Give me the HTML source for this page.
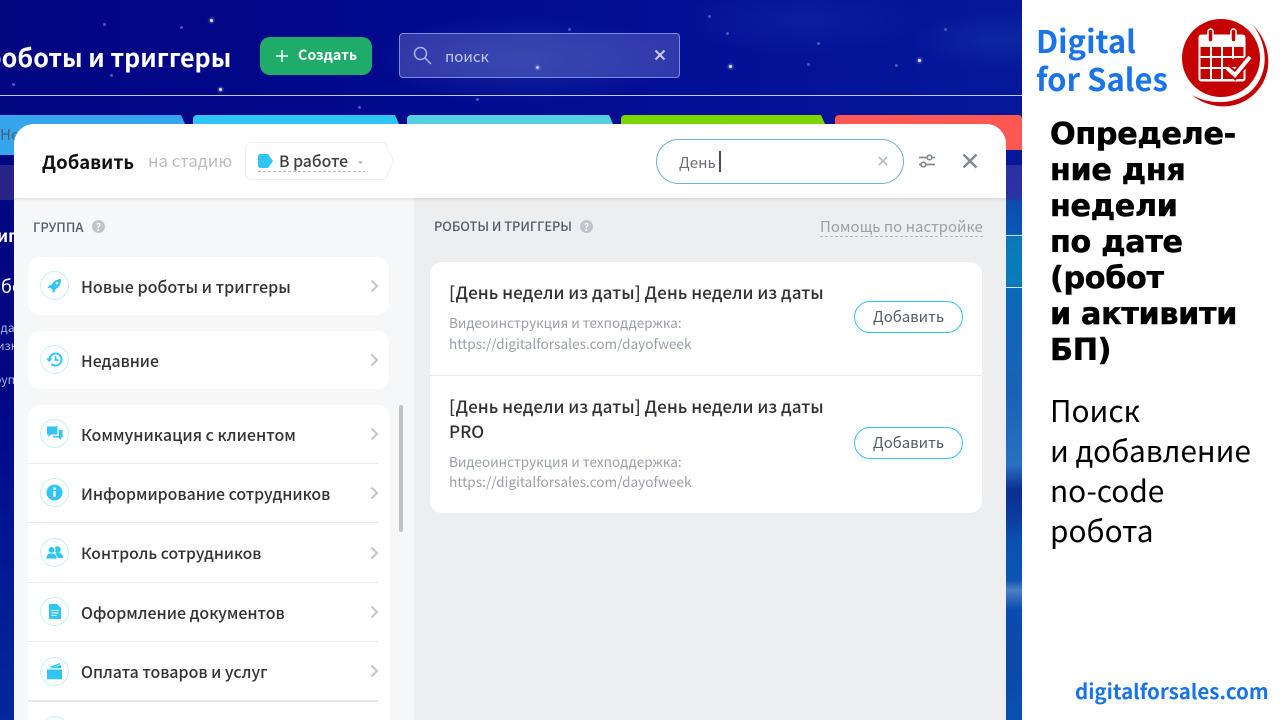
<!DOCTYPE html>
<html lang="ru"><head><meta charset="utf-8"><title>Роботы и триггеры</title>
<style>
*{box-sizing:border-box}
html,body{margin:0;padding:0;width:1280px;height:720px;overflow:hidden;background:#fff}
body{font-family:"Noto Sans CJK SC","Liberation Sans",sans-serif;color:#333}
#root{position:absolute;left:0;top:0;width:1280px;height:720px;overflow:hidden}
.a{position:absolute}
.t{position:absolute;white-space:nowrap;line-height:1}
#bg{left:0;top:0;width:1022px;height:720px;background:radial-gradient(ellipse 150px 45px at 520px 60px,rgba(50,90,190,.3),rgba(50,90,190,0)),radial-gradient(ellipse 120px 35px at 800px 20px,rgba(40,80,190,.2),rgba(40,80,190,0)),radial-gradient(ellipse 90px 30px at 1000px 40px,rgba(40,90,190,.25),rgba(40,90,190,0)),linear-gradient(90deg,#010681 0,#01088a 30%,#030f96 65%,#05189a 100%)}
#bg2{left:1006px;top:165px;width:16px;height:555px;background:linear-gradient(180deg,#2a2f9f 0,#2a35a0 33px,#0c4cb0 36px,#0a58b2 68px,#0a78b8 72px,#0a7cba 118px,#0d68b8 125px,#1a62b8 230px,#2a70c0 300px,#0a2f90 325px,#0a3a9c 350px,#0a50b0 375px,#0c55b2 415px,#4a80c4 425px,#0a4cae 445px,#0a4aa8 500px,#0a4fb0 555px)}
#bgl{left:0;top:400px;width:14px;height:320px;background:linear-gradient(180deg,#010788,#021f96 70%,#04279c)}
.star{position:absolute;border-radius:50%;background:#dfe3fa;box-shadow:0 0 2px 1px rgba(170,180,240,.6)}
.dim{position:absolute;width:3px;height:3px;border-radius:50%;background:#4a58bc}
.tab{position:absolute;top:115px;height:40px;border-radius:4px 4px 0 0;clip-path:polygon(0 0,calc(100% - 4px) 0,100% 9px,100% 100%,0 100%)}
.row{position:absolute;left:28px;width:362px;background:#fff}
.ic{position:absolute;left:40px;width:29px;height:29px;border-radius:50%;background:#fff;border:1px solid #c9eefb}
.ic svg{position:absolute;left:5px;top:5px;width:17px;height:17px}
.lbl{position:absolute;left:81px;font-size:15.9px;line-height:1;white-space:nowrap;color:#333;font-weight:500}
.chev{position:absolute;left:370px;width:9px;height:14px}
.sep{position:absolute;left:28px;width:350px;height:1px;background:#e9ebed}
.btn{position:absolute;left:854px;width:109px;height:32px;border:1px solid #2fc6f6;border-radius:16px;background:#fff;font-size:15px;line-height:29px;text-align:center;color:#535c69}
.ttl{position:absolute;left:449px;font-size:17.1px;line-height:1;white-space:nowrap;color:#333;font-weight:500}
.sub{position:absolute;left:449px;line-height:1;white-space:nowrap;color:#999fa6}
.h{position:absolute;left:1050px;font-family:"DejaVu Sans",sans-serif;font-weight:700;font-size:30.2px;letter-spacing:-.3px;-webkit-text-stroke:.5px #000;line-height:1;white-space:nowrap;color:#000}
.r{position:absolute;left:1050px;font-size:29.8px;line-height:1;white-space:nowrap;color:#000}
</style></head><body><div id="root">
<div id="bg" class="a"></div>
<div id="bg2" class="a"></div>
<div id="bgl" class="a"></div>
<div class="star" style="left:210px;top:19px;width:3px;height:3px"></div>
<div class="star" style="left:219px;top:88px;width:3px;height:3px"></div>
<div class="star" style="left:536px;top:66px;width:3px;height:3px"></div>
<div class="star" style="left:729px;top:65px;width:3px;height:3px"></div>
<div class="star" style="left:918px;top:59px;width:3px;height:3px"></div>
<div class="dim" style="left:708px;top:15px"></div>
<div class="dim" style="left:726px;top:32px"></div>
<div class="dim" style="left:817px;top:42px"></div>
<div class="dim" style="left:807px;top:63px"></div>
<div class="dim" style="left:895px;top:64px"></div>
<div class="dim" style="left:944px;top:28px"></div>
<div class="dim" style="left:568px;top:28px"></div>
<div class="dim" style="left:476px;top:98px"></div>
<div class="dim" style="left:110px;top:74px"></div>
<div class="dim" style="left:103px;top:23px"></div>
<div class="dim" style="left:180px;top:26px"></div>
<div class="dim" style="left:12px;top:83px"></div>
<div class="dim" style="left:358px;top:106px"></div>

<div class="t" style="left:-14.5px;top:45px;font-size:25.1px;font-weight:700;color:#fff">роботы и триггеры</div>
<div class="a" style="left:260px;top:37px;width:112px;height:38px;border-radius:10px;background:#1fab69"></div>
<svg class="a" style="left:275px;top:49px;width:14px;height:14px" viewBox="0 0 14 14"><path d="M7 1v12M1 7h12" stroke="#fff" stroke-width="1.4" fill="none"/></svg>
<div class="t" style="left:298px;top:48px;font-size:14.3px;font-weight:700;color:#fff">Создать</div>
<div class="a" style="left:399px;top:33px;width:281px;height:45px;border-radius:4px;background:rgba(130,135,210,.36);border:1px solid #7c8ae0"></div>
<svg class="a" style="left:413px;top:46px;width:19px;height:19px" viewBox="0 0 19 19"><circle cx="7.5" cy="7.5" r="6" stroke="#aab4e8" stroke-width="1.5" fill="none"/><path d="M12 12l6 6" stroke="#aab4e8" stroke-width="1.5"/></svg>
<div class="t" style="left:445px;top:49px;font-size:15px;color:#c5cbef">поиск</div>
<svg class="a" style="left:654px;top:49px;width:12px;height:12px" viewBox="0 0 12 12"><path d="M1.500 1.500l9 9M10.500 1.500l-9 9" stroke="#c5cbef" stroke-width="2"/></svg>
<div class="a" style="left:0;top:95px;width:1022px;height:1px;background:#c4c8ee"></div>
<div class="a" style="left:1006px;top:235px;width:16px;height:1px;background:#bcdcf0"></div>
<div class="a" style="left:1006px;top:287px;width:16px;height:1px;background:#d4e8f4"></div>

<div class="tab" style="left:-10px;width:195px;background:#37a5ee"></div>
<div class="tab" style="left:193px;width:206px;background:#2fc6f6"></div>
<div class="tab" style="left:407px;width:206px;background:#55d0e0"></div>
<div class="tab" style="left:621px;width:204px;background:#7bd500"></div>
<div class="tab" style="left:835px;width:187px;height:35px;background:#ff5752;clip-path:none"></div>
<div class="t" style="left:0;top:127px;font-size:15px;color:#44607a">Не</div>
<div class="a" style="left:0;top:165px;width:14px;height:35px;background:#2a2488"></div>

<div class="t" style="left:-3px;top:226px;font-size:17px;font-weight:700;color:#fff">иг</div>
<div class="t" style="left:1px;top:277px;font-size:18px;color:#fff">бо</div>
<div class="t" style="left:-6px;top:322px;font-size:12px;color:#aab4e8">еда</div>
<div class="t" style="left:-3px;top:340px;font-size:12px;color:#aab4e8">изн</div>
<div class="t" style="left:-6px;top:374px;font-size:12px;color:#aab4e8">руп</div>

<!-- slider panel -->
<div class="a" style="left:14px;top:124px;width:992px;height:596px;border-radius:20px 20px 0 0;background:#eceef0;overflow:hidden">
<div class="a" style="left:0;top:74px;width:400px;height:522px;background:#f5f7f8"></div>
<div class="a" style="left:0;top:0;width:992px;height:74px;background:#fff;box-shadow:0 1px 4px rgba(0,0,0,.12)"></div>
</div>
<div class="t" style="left:42px;top:153px;font-size:18.5px;font-weight:700;color:#111">Добавить</div>
<div class="t" style="left:148px;top:152px;font-size:16.8px;color:#b9bdc2">на стадию</div>
<svg class="a" style="left:245px;top:142px;width:150px;height:38px" viewBox="0 0 150 38"><path d="M6 .5H140L148.500 19L140 37.500H6a5.500 5.500 0 0 1-5.500-5.500V6A5.500 5.500 0 0 1 6 .5z" fill="#fff" stroke="#eef0f2"/><path d="M13 14.500a2.500 2.500 0 0 1 2.500-2.500H23l5 7-5 7H15.500A2.500 2.500 0 0 1 13 23.500z" fill="#2fc6f6"/><path d="M113 19.500h5l-2.500 2.500z" fill="#a8adb4"/><path d="M13 29.500h107" stroke="#b5b9be" stroke-dasharray="3 2" fill="none"/></svg>
<div class="t" style="left:279px;top:153px;font-size:15.8px;font-weight:500;color:#404040">В работе</div>

<div class="a" style="left:656px;top:139px;width:248px;height:45px;border:1px solid #6fb1dc;border-radius:23px;background:#fff"></div>
<div class="t" style="left:679px;top:155px;font-size:15px;color:#6a7076">День</div>
<div class="a" style="left:719px;top:151px;width:2px;height:21px;background:#4a4f55"></div>
<svg class="a" style="left:877px;top:155px;width:12px;height:12px" viewBox="0 0 12 12"><path d="M2 2l8 8M10 2l-8 8" stroke="#b6bbc1" stroke-width="1.700"/></svg>
<svg class="a" style="left:918px;top:153px;width:18px;height:16px" viewBox="0 0 18 16"><path d="M1 4.500h16M1 11.500h16" stroke="#828b95" stroke-width="1.800"/><circle cx="11.500" cy="4.500" r="2.300" fill="#fff" stroke="#828b95" stroke-width="1.600"/><circle cx="5.500" cy="11.500" r="2.300" fill="#fff" stroke="#828b95" stroke-width="1.600"/></svg>
<svg class="a" style="left:962px;top:153px;width:16px;height:16px" viewBox="0 0 16 16"><path d="M1.500 1.500l13 13M14.500 1.500l-13 13" stroke="#828b95" stroke-width="2.500"/></svg>

<div class="t" style="left:33px;top:220px;font-size:13px;font-weight:500;color:#535c69">ГРУППА</div>
<div class="a" style="left:92px;top:220px;width:13px;height:13px;border-radius:50%;background:#c0c4c9;color:#fff;font-size:10px;line-height:13px;text-align:center;font-weight:700">?</div>
<div class="t" style="left:434px;top:220px;font-size:12.76px;font-weight:500;color:#535c69">РОБОТЫ И ТРИГГЕРЫ</div>
<div class="a" style="left:580px;top:220px;width:13px;height:13px;border-radius:50%;background:#c0c4c9;color:#fff;font-size:10px;line-height:13px;text-align:center;font-weight:700">?</div>
<div class="t" style="left:820px;top:219px;font-size:15px;color:#9aa0a6">Помощь по настройке</div>
<div class="a" style="left:820px;top:236px;width:163px;height:0;border-top:1px dashed #b5b9be"></div>

<!-- left list -->
<div class="row" style="top:257px;width:361px;height:58px;border-radius:12px"></div>
<div class="row" style="top:331px;width:361px;height:58px;border-radius:12px"></div>
<div class="row" style="top:405px;height:315px;border-radius:12px 12px 0 0"></div>
<div class="sep" style="top:463px"></div>
<div class="sep" style="top:522px"></div>
<div class="sep" style="top:582px"></div>
<div class="sep" style="top:641px"></div>
<div class="sep" style="top:700px;height:2px;background:#e3e5e8"></div>
<div class="a" style="left:399px;top:405px;width:4px;height:127px;border-radius:2px;background:#bfc2c7"></div>

<div class="ic" style="top:271px"><svg viewBox="0 0 17 17"><path d="M15 2C10.500 2.300 7.500 4 5.500 8L3 8.500 1.500 11l3-.3 2.300 2.300-.3 3 2.500-1.500.5-2.500c4-2 5.700-5 5.500-10.500z" fill="#2fc6f6"/><circle cx="11" cy="6" r="1.300" fill="#fff"/></svg></div>
<div class="lbl" style="top:278px;font-size:16.1px">Новые роботы и триггеры</div>
<div class="ic" style="top:345px"><svg viewBox="0 0 17 17"><path d="M3.500 8.500a6 6 0 1 1 2 4.500" stroke="#2fc6f6" stroke-width="2" fill="none"/><path d="M0 7.500h6.500L3.200 11z" fill="#2fc6f6"/><path d="M9.500 5v4H12.500" stroke="#2fc6f6" stroke-width="1.700" fill="none"/></svg></div>
<div class="lbl" style="top:353px;font-size:15.8px">Недавние</div>
<div class="ic" style="top:419px"><svg viewBox="0 0 17 17"><path d="M1 1.500h10.500v8H5L2.500 12V9.500H1z" fill="#2fc6f6"/><path d="M13 5h3.500v7.500H15V15l-2.500-2.500H7V11h6z" fill="#2fc6f6"/></svg></div>
<div class="lbl" style="top:426px;font-size:16.05px">Коммуникация с клиентом</div>
<div class="ic" style="top:478px"><svg viewBox="0 0 17 17"><circle cx="8.500" cy="8.500" r="8" fill="#2fc6f6"/><rect x="7.300" y="7" width="2.400" height="6" fill="#fff"/><rect x="7.300" y="3.500" width="2.400" height="2.300" fill="#fff"/></svg></div>
<div class="lbl" style="top:486px;font-size:15.87px">Информирование сотрудников</div>
<div class="ic" style="top:538px"><svg viewBox="0 0 17 17"><circle cx="11.500" cy="5.500" r="3.200" fill="#2fc6f6"/><path d="M8 14c0-4 1-5.500 3.500-5.500S17 10 17 14z" fill="#2fc6f6"/><circle cx="5.500" cy="6" r="3.500" fill="#2fc6f6" stroke="#fff"/><path d="M0 15c0-4 2-6 5.500-6s5.500 2 5.500 6z" fill="#2fc6f6" stroke="#fff" stroke-width=".7"/></svg></div>
<div class="lbl" style="top:545px;font-size:15.7px">Контроль сотрудников</div>
<div class="ic" style="top:597px"><svg viewBox="0 0 17 17"><path d="M3 1h8l4 4v11H3z" fill="#2fc6f6"/><path d="M5.500 7.500h7M5.500 10h7M5.500 12.500h5" stroke="#fff" stroke-width="1.100"/></svg></div>
<div class="lbl" style="top:605px;font-size:15.95px">Оформление документов</div>
<div class="ic" style="top:657px"><svg viewBox="0 0 17 17"><path d="M3 4L14 0v1.500L6 4.500z" fill="#2fc6f6"/><path d="M3 5.500L15 2v3z" fill="#2fc6f6"/><path d="M1 6.500h15V15.500a.8.8 0 0 1-.8.8H1.800a.8.8 0 0 1-.8-.8z" fill="#2fc6f6"/></svg></div>
<div class="lbl" style="top:664px;font-size:15.9px">Оплата товаров и услуг</div>
<div class="ic" style="top:716px"></div>

<svg class="chev" style="top:279px" viewBox="0 0 9 14"><path d="M1.500 1.500L7 7l-5.500 5.500" stroke="#c3c6ca" stroke-width="2" fill="none"/></svg>
<svg class="chev" style="top:353px" viewBox="0 0 9 14"><path d="M1.500 1.500L7 7l-5.500 5.500" stroke="#c3c6ca" stroke-width="2" fill="none"/></svg>
<svg class="chev" style="top:427px" viewBox="0 0 9 14"><path d="M1.500 1.500L7 7l-5.500 5.500" stroke="#c3c6ca" stroke-width="2" fill="none"/></svg>
<svg class="chev" style="top:486px" viewBox="0 0 9 14"><path d="M1.500 1.500L7 7l-5.500 5.500" stroke="#c3c6ca" stroke-width="2" fill="none"/></svg>
<svg class="chev" style="top:546px" viewBox="0 0 9 14"><path d="M1.500 1.500L7 7l-5.500 5.500" stroke="#c3c6ca" stroke-width="2" fill="none"/></svg>
<svg class="chev" style="top:605px" viewBox="0 0 9 14"><path d="M1.500 1.500L7 7l-5.500 5.500" stroke="#c3c6ca" stroke-width="2" fill="none"/></svg>
<svg class="chev" style="top:664px" viewBox="0 0 9 14"><path d="M1.500 1.500L7 7l-5.500 5.500" stroke="#c3c6ca" stroke-width="2" fill="none"/></svg>

<!-- results -->
<div class="a" style="left:430px;top:262px;width:552px;height:251px;border-radius:12px;background:#fff"></div>
<div class="a" style="left:430px;top:375px;width:552px;height:1px;background:#e9ebed"></div>
<div class="ttl" style="top:283px">[День недели из даты] День недели из даты</div>
<div class="sub" style="top:316px;font-size:13.5px">Видеоинструкция и техподдержка:</div>
<div class="sub" style="top:337px;font-size:13.66px">https://digitalforsales.com/dayofweek</div>
<div class="btn" style="top:301px">Добавить</div>
<div class="ttl" style="top:397px">[День недели из даты] День недели из даты</div>
<div class="ttl" style="top:422px">PRO</div>
<div class="sub" style="top:455px;font-size:13.5px">Видеоинструкция и техподдержка:</div>
<div class="sub" style="top:475px;font-size:13.66px">https://digitalforsales.com/dayofweek</div>
<div class="btn" style="top:427px">Добавить</div>

<!-- right promo -->
<div class="a" style="left:1022px;top:0;width:258px;height:720px;background:#fff"></div>
<div class="t" style="left:1036px;top:24px;font-size:31px;font-weight:700;color:#1a73e8">Digital</div>
<div class="t" style="left:1036px;top:62px;font-size:31px;font-weight:700;color:#1a73e8">for Sales</div>
<svg class="a" style="left:1180px;top:18px;width:90px;height:90px" viewBox="0 0 90 90">
<circle cx="41" cy="40" r="39" fill="#c40000"/>
<path d="M73 7C95 30 92 62 72 78C56 92 30 92 12 77C30 87 54 87 70 74C88 58 90 30 73 7z" fill="#c40000"/>
<rect x="18.500" y="16.500" width="47" height="47" rx="3" fill="#fff"/>
<rect x="28" y="11" width="5" height="13" rx="2.500" fill="#c40000" stroke="#fff" stroke-width="1.500"/>
<rect x="51" y="11" width="5" height="13" rx="2.500" fill="#c40000" stroke="#fff" stroke-width="1.500"/>
<path d="M20.500 29h43v32h-43z" fill="#c40000"/>
<path d="M20.500 39h43M20.500 50h43M31 29v32M42 29v32M53 29v12" stroke="#fff" stroke-width="2"/>
<path d="M47 50l8 7 15-18" fill="none" stroke="#c40000" stroke-width="8"/>
<path d="M47 50l8 7 15-18" fill="none" stroke="#fff" stroke-width="4"/>
</svg>
<div class="h" style="top:120px">Определе-</div>
<div class="h" style="top:156px">ние дня</div>
<div class="h" style="top:192px">недели</div>
<div class="h" style="top:228px">по дате</div>
<div class="h" style="top:264px">(робот</div>
<div class="h" style="top:300px">и активити</div>
<div class="h" style="top:336px">БП)</div>
<div class="r" style="top:395px">Поиск</div>
<div class="r" style="top:435px">и добавление</div>
<div class="r" style="top:475px">no-code</div>
<div class="r" style="top:515px">робота</div>
<div class="t" style="left:1075px;top:680px;font-size:20.5px;font-weight:700;color:#1a73e8">digitalforsales.com</div>
</div></body></html>
